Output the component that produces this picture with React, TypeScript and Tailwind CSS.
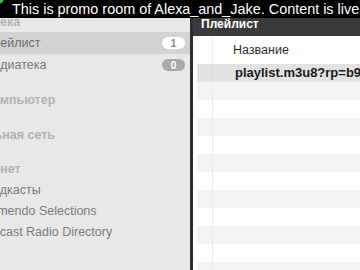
import React from "react";

const font = { fontFamily: '"Liberation Sans", Arial, sans-serif' };

function Header({ text, ml, h, mt }: { text: string; ml: string; h: string; mt: string }) {
  return (
    <div className={`${h} ${mt} flex items-center whitespace-nowrap text-[12.5px] font-bold text-[#b3b3b3]`}>
      <span className={ml}>{text}</span>
    </div>
  );
}

export default function App() {
  const rows = Array.from({ length: 11 }, (_, i) => i);
  return (
    <div className="relative w-[360px] h-[270px] overflow-hidden flex bg-[#e8e8e8]" style={font}>
      {/* Sidebar */}
      <div className="w-[190px] shrink-0 h-full bg-[#e8e8e8] flex flex-col pt-[13px] overflow-hidden">
        <Header text="Медиатека" ml="ml-[-46px]" h="h-[19px]" mt="mt-0" />
        <div className="h-[22px] bg-[#d3d3d3] flex items-center justify-between pr-[5px] whitespace-nowrap">
          <span className="ml-[-16px] text-[12.5px] text-[#6c6c6c]">Плейлист</span>
          <span className="w-[23px] h-[12px] shrink-0 rounded-full bg-white text-[#8a8a8a] text-[10.5px] font-bold flex items-center justify-center leading-none">
            1
          </span>
        </div>
        <div className="h-[22px] flex items-center justify-between pr-[5px] whitespace-nowrap">
          <span className="ml-[-17px] text-[12.5px] text-[#787878]">Медиатека</span>
          <span className="w-[23px] h-[12px] shrink-0 rounded-full bg-[#a9a9a9] text-white text-[10.5px] font-bold flex items-center justify-center leading-none">
            0
          </span>
        </div>
        <Header text="Мой компьютер" ml="ml-[-43px]" h="h-[22px]" mt="mt-[13px]" />
        <Header text="Локальная сеть" ml="ml-[-43px]" h="h-[22px]" mt="mt-[13px]" />
        <Header text="Интернет" ml="ml-[-37px]" h="h-[21px]" mt="mt-[13px]" />
        <div className="h-[21px] flex items-center whitespace-nowrap">
          <span className="ml-[-16px] text-[12.5px] text-[#7c7c7c]">Подкасты</span>
        </div>
        <div className="h-[21px] flex items-center whitespace-nowrap">
          <span className="ml-[-16px] text-[12.5px] text-[#7c7c7c]">Jamendo Selections</span>
        </div>
        <div className="h-[21px] flex items-center whitespace-nowrap">
          <span className="ml-[-17px] text-[12.5px] text-[#7c7c7c]">Icecast Radio Directory</span>
        </div>
      </div>

      {/* Divider */}
      <div className="w-[3px] shrink-0 h-full bg-[#2e2e2e]" />

      {/* Main */}
      <div className="flex-1 h-full flex flex-col min-w-0">
        <div className="h-[36px] shrink-0 bg-[#3a3a3a] flex items-end pb-[5px] pl-[8px]">
          <span className="text-white font-bold text-[12px] leading-[14px]">Плейлист</span>
        </div>
        <div className="flex-1 bg-white pl-[4px] overflow-hidden">
          <div className="h-[28px] flex">
            <div className="w-[16px] shrink-0 h-full border-r border-[#ececec]" />
            <div className="pl-[20px] leading-[28px] text-[12.5px] text-[#2e2e2e] whitespace-nowrap">Название</div>
          </div>
          <div className="h-[18px] flex bg-[#e2e2e2]">
            <div className="w-[16px] shrink-0 h-full border-r border-[#d8d8d8]" />
            <div className="pl-[22px] leading-[18px] text-[13px] font-bold text-[#1a1a1a] whitespace-nowrap">
              playlist.m3u8?rp=b98c4e1a
            </div>
          </div>
          {rows.map((i) => (
            <div key={i} className={`h-[18px] flex ${i % 2 === 0 ? "bg-[#f4f4f4]" : "bg-white"}`}>
              <div className="w-[16px] shrink-0 h-full border-r border-[#ebebeb]" />
            </div>
          ))}
        </div>
      </div>

      {/* Promo overlay bar */}
      <div className="absolute top-0 left-0 w-[360px] h-[18px] bg-black text-white text-[14.4px] leading-[18px] pl-[12px] whitespace-nowrap overflow-hidden">
        This is promo room of Alexa_and_Jake. Content is live
      </div>
      <div className="absolute left-[-8px] top-[-8px] w-[12px] h-[12px] rounded-full bg-[#2fc23a]" />
    </div>
  );
}
